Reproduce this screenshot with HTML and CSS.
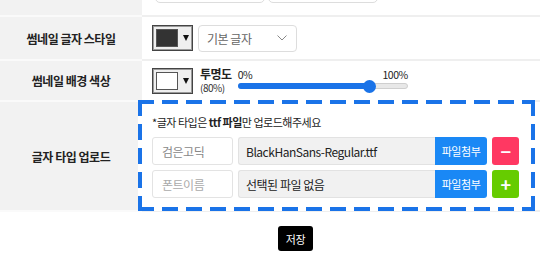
FILE: index.html
```html
<!DOCTYPE html>
<html>
  <head>
    <meta charset="utf-8" />
    <title>썸네일 설정</title>
    <link rel="stylesheet" href="styles.css">
  </head>
  <body>
    <div class="settings">
      <div class="row row-top">
        <div class="label"></div>
        <div class="value">
          <span class="pill"></span>
          <span class="pill"></span>
        </div>
      </div>

      <div class="row row-style">
        <div class="label">썸네일 글자 스타일</div>
        <div class="value">
          <div class="picker"><span class="swatch dark"></span><span class="caret"></span></div>
          <div class="select">기본 글자
            <svg class="chevron" width="10" height="6" viewBox="0 0 10 6"><path d="M0.5 0.5 L5 5 L9.5 0.5" fill="none" stroke="#888" stroke-width="1"/></svg>
          </div>
        </div>
      </div>

      <div class="row row-bg">
        <div class="label">썸네일 배경 색상</div>
        <div class="value">
          <div class="picker"><span class="swatch light"></span><span class="caret"></span></div>
          <div class="opacity-name">
            <strong>투명도</strong>
            <span>(80%)</span>
          </div>
          <div class="slider">
            <div class="slider-marks"><span>0%</span><span>100%</span></div>
            <div class="track">
              <div class="fill"></div>
              <div class="thumb"></div>
            </div>
          </div>
        </div>
      </div>

      <div class="row row-upload">
        <div class="label">글자 타입 업로드</div>
        <div class="value">
          <div class="upload-box">
            <p class="notice">*글자 타입은 <b>ttf 파일</b>만 업로드해주세요</p>
            <div class="font-row">
              <input class="font-name" placeholder="폰트이름" value="검은고딕">
              <div class="file-name">BlackHanSans-Regular.ttf</div>
              <button class="attach">파일첨부</button>
              <button class="square remove">&minus;</button>
            </div>
            <div class="font-row">
              <input class="font-name" placeholder="폰트이름">
              <div class="file-name">선택된 파일 없음</div>
              <button class="attach">파일첨부</button>
              <button class="square add">+</button>
            </div>
          </div>
        </div>
      </div>
    </div>

    <div class="actions">
      <button class="save">저장</button>
    </div>
  </body>
</html>
```

FILE: styles.css
```css
html {
  box-sizing: border-box;
}
*,
*:before,
*:after {
  box-sizing: inherit;
}
body {
  margin: 0;
  background: #fff;
  color: #222;
  font-family: "Noto Sans CJK KR", "Noto Sans", sans-serif;
  font-size: 12px;
  letter-spacing: -0.04em;
}
.row {
  display: grid;
  grid-template-columns: 142px 1fr;
}
.label {
  background: #f2f2f2;
  border-bottom: 2px solid #fafafa;
  display: flex;
  align-items: center;
  justify-content: center;
  font-weight: 700;
  font-size: 12px;
}
.value {
  border-bottom: 2px solid #efefef;
  display: flex;
  align-items: center;
  padding-left: 10px;
}
.row-top {
  height: 17px;
}
.row-top .value {
  align-items: flex-start;
  overflow: hidden;
  padding-left: 13px;
  gap: 3px;
}
.pill {
  width: 110px;
  height: 20px;
  margin-top: -17px;
  border: 1px solid #ddd;
  border-radius: 5px;
}
.row-style {
  height: 44px;
}
.row-bg {
  height: 41px;
}
.picker {
  width: 41px;
  height: 26px;
  border: 1px solid #444;
  box-shadow: inset 0 0 0 1px #9a9a9a;
  background: #efefef;
  display: flex;
  align-items: center;
  padding-left: 3px;
}
.swatch {
  width: 22px;
  height: 18px;
  border: 1px solid #555;
}
.swatch.dark {
  background: #333;
}
.swatch.light {
  background: #fff;
}
.caret {
  margin-left: 5px;
  border-left: 3px solid transparent;
  border-right: 3px solid transparent;
  border-top: 6px solid #111;
}
.select {
  margin-left: 5px;
  width: 99px;
  height: 27px;
  border: 1px solid #ddd;
  border-radius: 4px;
  display: flex;
  align-items: center;
  padding: 0 9px 0 8px;
  color: #666;
  justify-content: space-between;
}
.opacity-name {
  margin-left: 7px;
  display: flex;
  flex-direction: column;
  gap: 1px;
}
.opacity-name strong {
  font-size: 12px;
  line-height: 14px;
}
.opacity-name span {
  font-size: 10px;
  line-height: 12px;
  color: #333;
}
.slider {
  margin-left: 6px;
  width: 170px;
  margin-top: -4px;
}
.slider-marks {
  display: flex;
  justify-content: space-between;
  font-size: 10.5px;
  line-height: 12px;
}
.track {
  position: relative;
  margin-top: 2px;
  height: 6px;
  background: #e8e8e8;
  border: 1px solid #cfcfcf;
  border-radius: 3px;
}
.fill {
  width: 78%;
  height: 6px;
  margin: -1px;
  background: #1a73e8;
  border-radius: 3px;
}
.thumb {
  position: absolute;
  top: -4px;
  left: calc(78% - 7px);
  width: 13px;
  height: 13px;
  border-radius: 50%;
  background: #1a73e8;
}
.row-upload .value {
  padding: 0 5px 0 0;
  align-items: stretch;
}
.upload-box {
  position: relative;
  flex: 1;
  margin: -2px 0 -1px -4px;
  background:
    repeating-linear-gradient(90deg, #1a73e8 0 16px, transparent 16px 24px) left top / 100% 4px no-repeat,
    repeating-linear-gradient(90deg, #1a73e8 0 16px, transparent 16px 24px) left bottom / 100% 4px no-repeat,
    repeating-linear-gradient(180deg, #1a73e8 0 16px, transparent 16px 24px) left top / 4px 100% no-repeat,
    repeating-linear-gradient(180deg, #1a73e8 0 16px, transparent 16px 24px) right top / 4px 100% no-repeat,
    #fff;
  padding: 14px 16px 13px 14px;
}
.notice {
  margin: 0 0 7px;
  font-size: 11px;
  line-height: 16px;
}
.font-row {
  display: flex;
  height: 28px;
  margin-top: 5px;
}
.font-name {
  width: 81px;
  border: 1px solid #e3e3e3;
  border-radius: 3px;
  padding: 0 9px;
  font: inherit;
  font-size: 12px;
  letter-spacing: inherit;
  color: #888;
}
.font-name::placeholder {
  color: #aaa;
}
.file-name {
  flex: 1;
  margin-left: 5px;
  background: #f1f1f1;
  border: 1px solid #e2e2e2;
  border-right: none;
  border-radius: 3px 0 0 3px;
  display: flex;
  align-items: center;
  padding-left: 7px;
}
button {
  font: inherit;
  letter-spacing: inherit;
  border: none;
  color: #fff;
  cursor: pointer;
}
.attach {
  width: 52px;
  background: #1a88f5;
  border-radius: 0 3px 3px 0;
  font-size: 11px;
  padding: 0;
}
.square {
  width: 27px;
  margin-left: 5px;
  border-radius: 3px;
  font-size: 18px;
  font-weight: 700;
  padding: 0;
}
.remove {
  background: #ff3862;
}
.add {
  background: #66cc00;
}
.actions {
  padding: 14px 0 0 51px;
  text-align: center;
}
.save {
  width: 35px;
  height: 25px;
  background: #000;
  border-radius: 3px;
  font-size: 11px;
  padding: 0;
}
```
